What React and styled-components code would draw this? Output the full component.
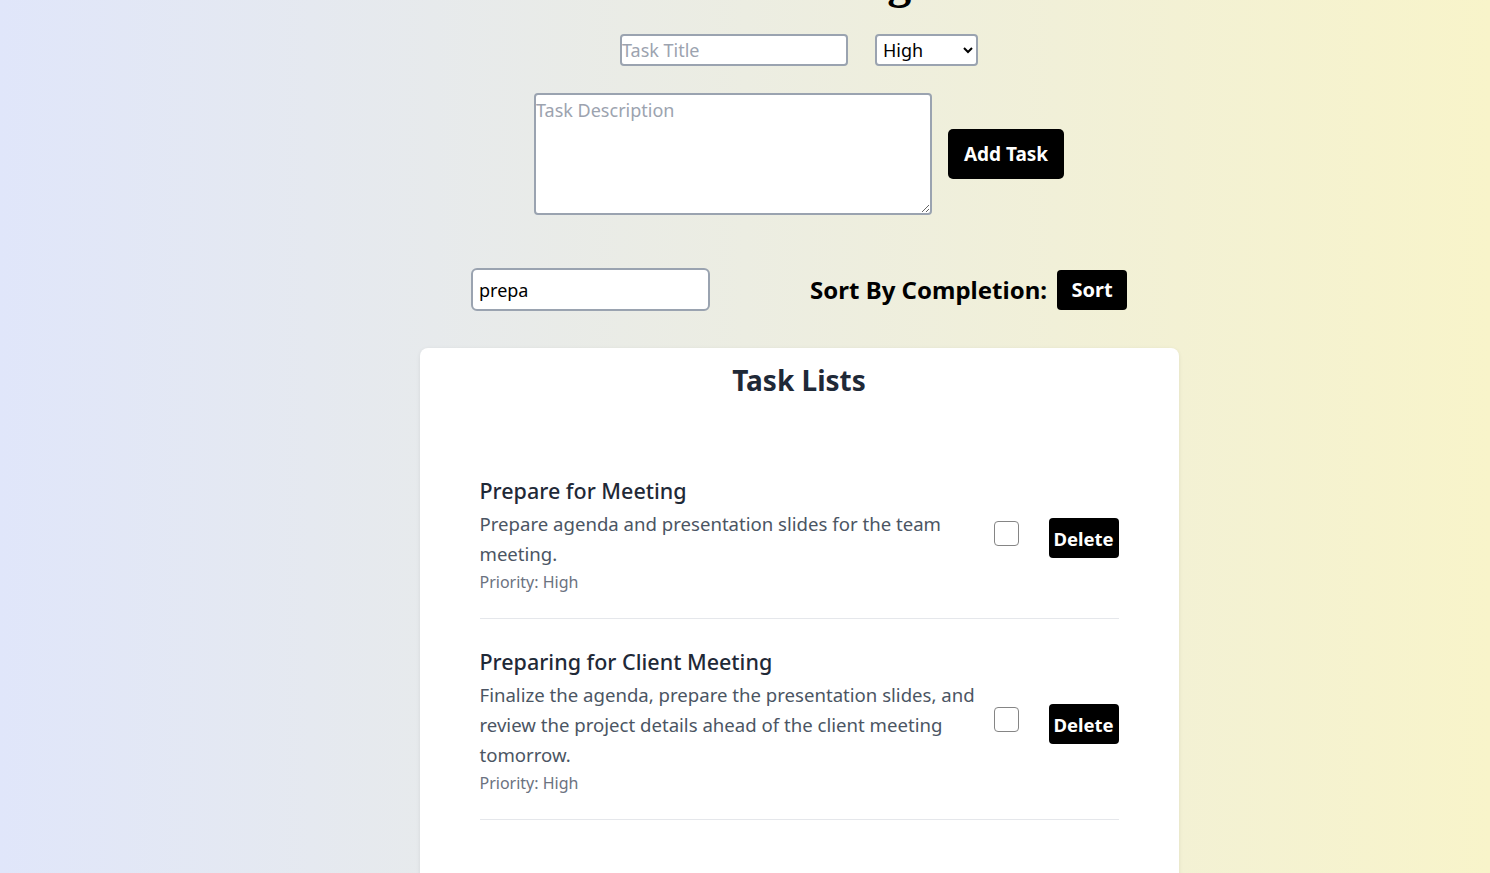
import React, { useState } from 'react';
import styled, { createGlobalStyle } from 'styled-components';

const GlobalStyle = createGlobalStyle`
  body{
    margin:0;
    font-family:"Noto Sans", "Open Sans", sans-serif;
    background:linear-gradient(to right, #e0e6fa, #f8f4ca);
    min-height:100vh;
  }
  *{ box-sizing:border-box; }
`;

const Page = styled.div`
  display:flex;
  flex-direction:column;
  align-items:center;
  padding-left:108px;
  padding-bottom:40px;
`;

const Heading = styled.h1`
  font-family:"Liberation Serif", serif;
  font-size:48px;
  font-weight:700;
  line-height:normal;
  margin:-46px 0 25px 14px;
  color:#000;
`;

const Row = styled.div`
  display:flex;
  align-items:center;
  gap:${(props)=>props.gap || 16}px;
  margin-bottom:${(props)=>props.mb || 0}px;
`;

const TextInput = styled.input`
  width:${(props)=>props.w}px;
  height:${(props)=>props.h}px;
  border:2px solid #9aa3b0;
  border-radius:${(props)=>props.r || 4}px;
  padding:0 ${(props)=>props.px || 0}px;
  font-family:inherit;
  font-size:18px;
  color:#000;
  background:#fff;
  outline:none;
  &::placeholder{ color:#9ca3af; }
`;

const Select = styled.select`
  width:103px;
  height:32px;
  border:2px solid #9aa3b0;
  border-radius:4px;
  padding:0 2px;
  font-family:inherit;
  font-size:18px;
  color:#000;
  background:#fff;
`;

const TextArea = styled.textarea`
  width:398px;
  height:122px;
  border:2px solid #9aa3b0;
  border-radius:4px;
  padding:3px 0 0;
  font-family:inherit;
  font-size:18px;
  background:#fff;
  outline:none;
  &::placeholder{ color:#9ca3af; }
`;

const BlackButton = styled.button`
  width:${(props)=>props.w}px;
  height:${(props)=>props.h}px;
  background:#000;
  color:#fff;
  border:none;
  border-radius:${(props)=>props.r || 4}px;
  font-family:inherit;
  font-weight:700;
  font-size:${(props)=>props.fs || 19}px;
  padding:0;
  cursor:pointer;
`;

const SearchRow = styled.div`
  width:656px;
  display:flex;
  justify-content:space-between;
  align-items:center;
  margin-bottom:37px;
`;

const SortGroup = styled.div`
  display:flex;
  align-items:center;
  gap:10px;
`;

const SortLabel = styled.span`
  font-size:24px;
  font-weight:700;
  color:#000;
`;

const Card = styled.div`
  width:759px;
  background:#fff;
  border-radius:8px;
  box-shadow:0 1px 4px rgba(0,0,0,0.08);
  padding:12px 60px 120px;
`;

const CardTitle = styled.h2`
  margin:0 0 48px;
  text-align:center;
  font-size:28px;
  line-height:40px;
  font-weight:700;
  color:#1f2937;
`;

const TaskItem = styled.div`
  display:flex;
  align-items:center;
  gap:14px;
  padding:27px 0 23px;
  border-bottom:1px solid #e5e7eb;
`;

const TaskText = styled.div`
  flex:1;
`;

const TaskTitle = styled.div`
  font-size:21.5px;
  line-height:32px;
  font-weight:500;
  color:#1f2937;
  margin-bottom:2px;
`;

const TaskDesc = styled.div`
  font-size:18.6px;
  line-height:30px;
  color:#4b5563;
`;

const TaskPriority = styled.div`
  font-size:16px;
  line-height:26px;
  color:#6b7280;
`;

const Check = styled.input`
  appearance:none;
  width:25px;
  height:25px;
  margin:0 16px 3px 0;
  border:1.5px solid #858585;
  border-radius:4px;
  background:#fff;
  &:checked{ background:#0075ff; border-color:#0075ff; }
`;

const DeleteButton = styled(BlackButton)`
  margin-top:6px;
`;

const tasks = [
  {
    id: 1,
    title: 'Prepare for Meeting',
    desc: 'Prepare agenda and presentation slides for the team meeting.',
    priority: 'High',
  },
  {
    id: 2,
    title: 'Preparing for Client Meeting',
    desc: 'Finalize the agenda, prepare the presentation slides, and review the project details ahead of the client meeting tomorrow.',
    priority: 'High',
  },
];

export default function App() {
  const [search, setSearch] = useState('prepa');
  return (
    <>
      <GlobalStyle />
      <Page>
        <Heading>Task Manager</Heading>
        <Row gap={27} mb={27}>
          <TextInput w={228} h={32} placeholder="Task Title" />
          <Select defaultValue="High">
            <option>Low</option>
            <option>Medium</option>
            <option>High</option>
          </Select>
        </Row>
        <Row gap={16} mb={53}>
          <TextArea placeholder="Task Description" />
          <BlackButton w={116} h={50} r={5}>Add Task</BlackButton>
        </Row>
        <SearchRow>
          <TextInput w={239} h={43} r={6} px={6} value={search} onChange={(e)=>setSearch(e.target.value)} />
          <SortGroup>
            <SortLabel>Sort By Completion:</SortLabel>
            <BlackButton w={70} h={40} fs={20}>Sort</BlackButton>
          </SortGroup>
        </SearchRow>
        <Card>
          <CardTitle>Task Lists</CardTitle>
          {tasks.map((t)=>(
            <TaskItem key={t.id}>
              <TaskText>
                <TaskTitle>{t.title}</TaskTitle>
                <TaskDesc>{t.desc}</TaskDesc>
                <TaskPriority>Priority: {t.priority}</TaskPriority>
              </TaskText>
              <Check type="checkbox" />
              <DeleteButton w={70} h={40} fs={18.5}>Delete</DeleteButton>
            </TaskItem>
          ))}
        </Card>
      </Page>
    </>
  );
}
